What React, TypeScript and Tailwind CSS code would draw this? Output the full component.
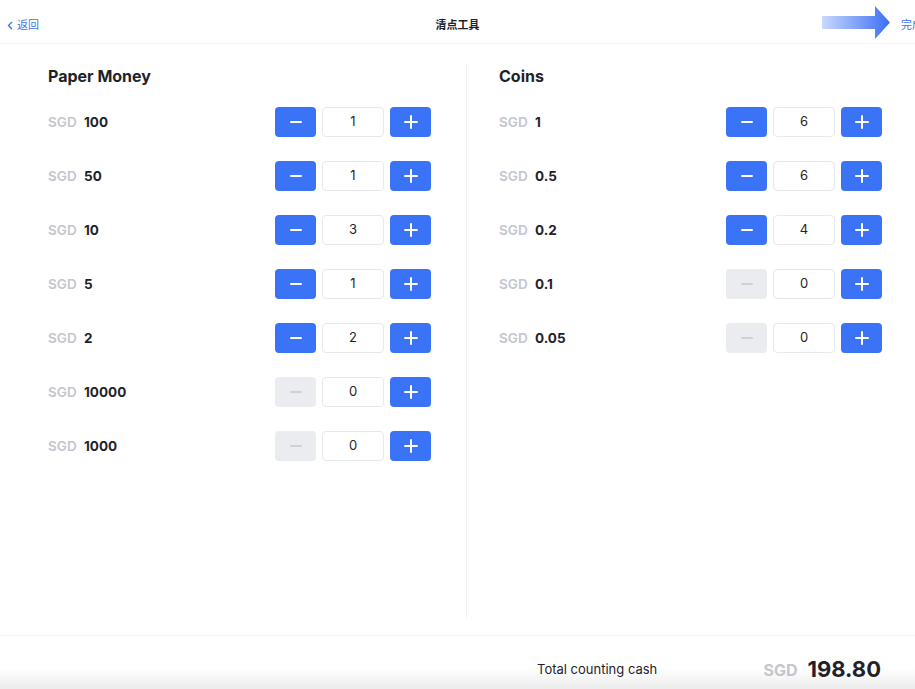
import React from "react";

const paper = [
  { v: "100", n: 1 },
  { v: "50", n: 1 },
  { v: "10", n: 3 },
  { v: "5", n: 1 },
  { v: "2", n: 2 },
  { v: "10000", n: 0 },
  { v: "1000", n: 0 },
];
const coins = [
  { v: "1", n: 6 },
  { v: "0.5", n: 6 },
  { v: "0.2", n: 4 },
  { v: "0.1", n: 0 },
  { v: "0.05", n: 0 },
];

function Row({ v, n }: { v: string; n: number }) {
  const active = n > 0;
  return (
    <div className="flex items-center h-[30px]">
      <span className="text-[13.5px] font-semibold text-[#c3c6ce] w-[36px]">SGD</span>
      <span className="text-[13.5px] font-bold text-[#1f2329]">{v}</span>
      <div className="ml-auto flex items-center gap-[6px]">
        <div
          className={
            "w-[41px] h-[30px] rounded-[4px] flex items-center justify-center " +
            (active ? "bg-[#3a73f6]" : "bg-[#ebecf0]")
          }
        >
          <div className={"w-[12px] h-[2px] rounded " + (active ? "bg-white" : "bg-[#cfd1d6]")} />
        </div>
        <div className="w-[62px] h-[30px] rounded-[4px] border border-[#e7e8eb] bg-white flex items-center justify-center text-[13px] text-[#1f2329]">
          {n}
        </div>
        <div className="w-[41px] h-[30px] rounded-[4px] bg-[#3a73f6] flex items-center justify-center relative">
          <div className="w-[14px] h-[2px] rounded bg-white" />
          <div className="absolute w-[2px] h-[14px] rounded bg-white" />
        </div>
      </div>
    </div>
  );
}

function Column({ title, items }: { title: string; items: { v: string; n: number }[] }) {
  return (
    <div className="w-[383px] flex flex-col">
      <div className="h-[20px] flex items-center text-[16px] font-bold text-[#1f2329]">{title}</div>
      <div className="mt-[21px] flex flex-col gap-[24px]">
        {items.map((it) => (
          <Row key={it.v} v={it.v} n={it.n} />
        ))}
      </div>
    </div>
  );
}

export default function App() {
  return (
    <div
      className="w-[915px] h-[689px] bg-white flex flex-col overflow-hidden"
      style={{ fontFamily: "Inter, 'Noto Sans CJK SC', sans-serif" }}
    >
      <div className="h-[44px] shrink-0 border-b border-[#f3f3f5] relative flex items-center pt-[8px]">
        <div className="pl-[7px] flex items-center gap-[4px] text-[11px] text-[#3a73f6]">
          <svg width="6" height="9" viewBox="0 0 6 9">
            <path d="M5 1 L1.5 4.5 L5 8" stroke="#3a73f6" strokeWidth="1.4" fill="none" />
          </svg>
          <span>返回</span>
        </div>
        <div className="absolute left-0 right-0 text-center text-[11px] font-semibold text-[#1f2329] pointer-events-none">
          清点工具
        </div>
        <div className="ml-auto flex items-center gap-[11px] -mr-[11px]">
          <svg width="68" height="33" viewBox="0 0 68 33" className="relative -top-[3px]">
            <defs>
              <linearGradient id="ag" x1="0" y1="0" x2="1" y2="0">
                <stop offset="0" stopColor="#c9d8fd" />
                <stop offset="1" stopColor="#3a6ff5" />
              </linearGradient>
            </defs>
            <path d="M0 10 H53 V0 L68 16.5 L53 33 V23 H0 Z" fill="url(#ag)" />
          </svg>
          <span className="text-[11px] text-[#3a73f6] w-[25px] whitespace-nowrap">完成</span>
        </div>
      </div>
      <div className="flex-1 flex pt-[22px] pl-[48px] pb-[17px] border-b border-[#f3f3f5]">
        <Column title="Paper Money" items={paper} />
        <div className="w-px bg-[#f0f1f3] ml-[35px] mr-[32px] -mt-[3px]" />
        <Column title="Coins" items={coins} />
      </div>
      <div className="h-[53px] shrink-0 flex items-center pt-[14px] bg-gradient-to-b from-white from-60% to-[#ececec]">
        <span className="ml-[537px] text-[13px] text-[#1f2329]">Total counting cash</span>
        <span className="ml-auto text-[16px] font-bold text-[#c3c6ce]">SGD</span>
        <span className="ml-[10px] mr-[34px] text-[22px] font-bold text-[#1f2329]">198.80</span>
      </div>
    </div>
  );
}
